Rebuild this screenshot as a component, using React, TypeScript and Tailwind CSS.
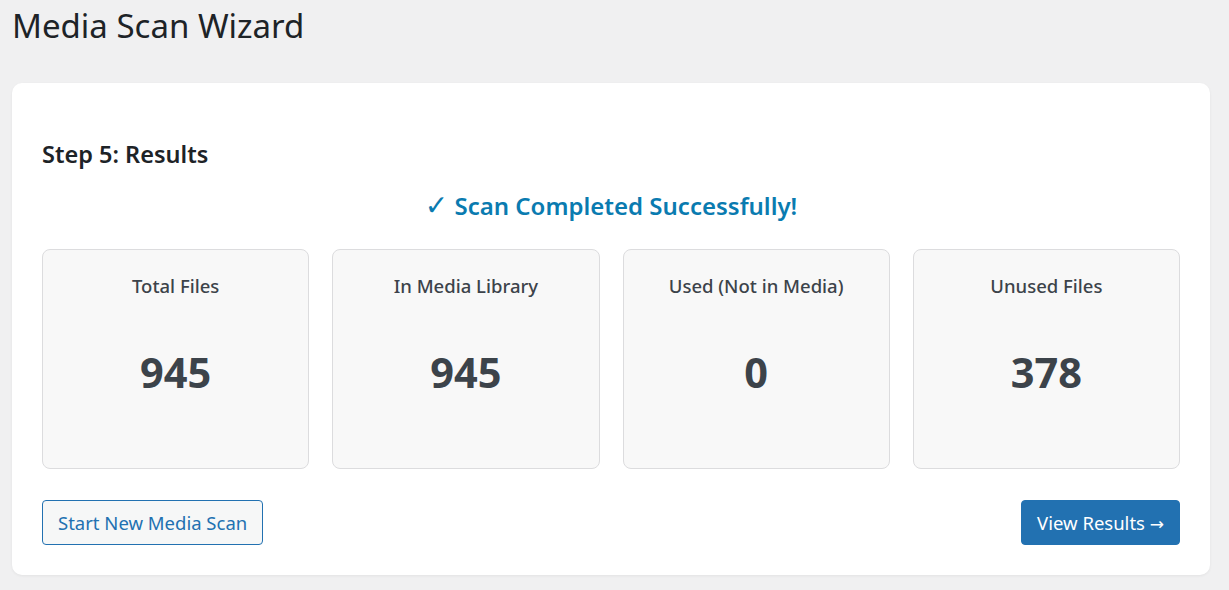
import React from "react";

const stats = [
  { label: "Total Files", value: "945" },
  { label: "In Media Library", value: "945" },
  { label: "Used (Not in Media)", value: "0" },
  { label: "Unused Files", value: "378" },
];

export default function App() {
  return (
    <div
      className="min-h-[590px] w-full bg-[#f0f0f1] pl-[12px] pr-[19px] pt-[4px] pb-[15px] text-[#3c434a]"
      style={{ fontFamily: '"Noto Sans", "Open Sans", sans-serif' }}
    >
      <h1 className="text-[33px] leading-[44px] font-normal text-[#1d2327] m-0">Media Scan Wizard</h1>
      <div className="mt-[35px] rounded-[10px] bg-white shadow-[0_1px_3px_rgba(0,0,0,0.06)] px-[30px] pt-[56px] pb-[30px]">
        <h2 className="text-[23.5px] leading-[30px] font-semibold text-[#1d2327]">Step 5: Results</h2>
        <p className="mt-[22px] h-[30px] text-center text-[24px] leading-[30px] font-semibold text-[#0a7bb0]">
          <span className="font-['DejaVu_Sans'] font-normal text-[28px] leading-[0]">✓</span> Scan Completed Successfully!
        </p>
        <div className="mt-[28px] grid grid-cols-4 gap-[23px]">
          {stats.map((s) => (
            <div
              key={s.label}
              className="flex h-[220px] flex-col items-center rounded-[8px] border border-[#dcdcde] bg-[#f8f8f8] pt-[23px]"
            >
              <div className="text-[18.5px] leading-[26px] font-medium text-[#3c434a]">{s.label}</div>
              <div className="mt-[45px] text-[41.5px] leading-[56px] font-bold text-[#3c434a]">{s.value}</div>
            </div>
          ))}
        </div>
        <div className="mt-[31px] flex items-center justify-between">
          <button className="h-[45px] rounded-[4px] border border-[#2271b1] bg-[#f6f7f7] px-[15px] text-[18.5px] leading-[26px] text-[#2271b1]">
            Start New Media Scan
          </button>
          <button className="h-[45px] rounded-[4px] border border-[#2271b1] bg-[#2271b1] px-[15px] text-[18.5px] leading-[26px] text-white">
            View Results <span className="font-['DejaVu_Sans'] text-[17px] leading-[0]">→</span>
          </button>
        </div>
      </div>
    </div>
  );
}
